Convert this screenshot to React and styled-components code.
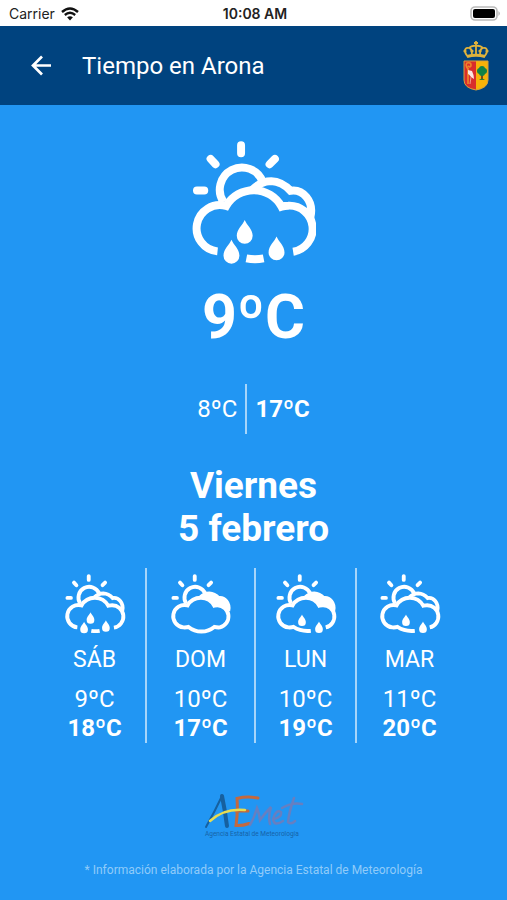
import React from "react"
import styled, { createGlobalStyle } from "styled-components"

const GlobalStyle = createGlobalStyle`
  * {
    box-sizing: border-box;
  }

  body {
    margin: 0;
    background: #2196f3;
    color: #fff;
    font-family: Roboto, "Liberation Sans", sans-serif;
  }
`

const Screen = styled.div`
  display: flex;
  flex-direction: column;
  min-height: 100vh;
`

const StatusBar = styled.div`
  display: grid;
  grid-template-columns: 1fr auto 1fr;
  align-items: center;
  height: 26px;
  padding: 1px 6px 0 9px;
  background: #fff;
  color: #222;
  font-family: Inter, "Liberation Sans", sans-serif;
  font-size: 14px;

  .carrier {
    display: flex;
    align-items: center;
    gap: 6px;
  }

  .clock {
    font-weight: 600;
  }

  .battery {
    display: flex;
    justify-content: flex-end;
  }
`

const Header = styled.header`
  display: flex;
  align-items: center;
  height: 79px;
  padding: 0 18px 0 28px;
  background: #00437f;

  h1 {
    flex: 1;
    margin: 0 0 0 28px;
    font-size: 24px;
    font-weight: 400;
    line-height: 30px;
  }
`

const BackButton = styled.button`
  display: flex;
  padding: 0;
  border: 0;
  background: none;
  color: #fff;
  cursor: pointer;
`

const Main = styled.main`
  display: flex;
  flex-direction: column;
  align-items: center;
  padding-top: 36px;
`

const Current = styled.div`
  margin-top: 16px;
  font-size: 61px;
  font-weight: 700;
  line-height: 72px;
`

const Range = styled.div`
  display: flex;
  margin-top: 31px;
  font-size: 24px;
  line-height: 50px;

  .min {
    padding-right: 8px;
    border-right: 2px solid #a6d5fa;
  }

  .max {
    padding-left: 8px;
    font-weight: 700;
  }
`

const Today = styled.h2`
  margin: 30px 0 0;
  font-size: 37px;
  font-weight: 700;
  line-height: 43px;
  text-align: center;
`

const Days = styled.div`
  display: grid;
  grid-template-columns: 101fr 109fr 101fr 107fr;
  align-self: stretch;
  margin: 18px 45px 0 44px;
`

const Day = styled.div`
  display: flex;
  flex-direction: column;
  align-items: center;
  height: 175px;
  padding-top: 6px;
  font-size: 24px;
  line-height: 29px;

  & + & {
    border-left: 2px solid #a6d5fa;
  }

  .name {
    margin: 11px 0;
    font-size: 23px;
  }

  .max {
    font-weight: 700;
  }
`

const Footer = styled.footer`
  display: flex;
  flex-direction: column;
  align-items: center;
  gap: 23px;
  margin-top: 50px;
  padding-bottom: 16px;
  color: #90cbf9;
  font-size: 12px;
  line-height: 16px;

  p {
    margin: 0;
  }
`

// tip of each drop
const drops = {
  rain: [
    [194, 270],
    [154, 330],
    [290, 320],
  ],
  cloudy: [],
  showers: [
    [197, 284],
    [303, 328],
  ],
}

const cloudTop = "A70 70 0 1 1 138 228 A96 96 0 0 1 305 230 Q315 227 325 227"

const clouds = {
  rain: `M112 365 ${cloudTop} A70 70 0 0 1 340 366`,
  cloudy: `M144 362 Q132 366 112 365 ${cloudTop} A70 70 0 0 1 340 365 Q320 366 305 362 A128 128 0 0 1 144 362 Z`,
  showers: `M252 386 Q192 393 144 362 Q132 366 112 365 ${cloudTop} A70 70 0 0 1 345 365`,
}

const WeatherIcon = ({ kind, filled, size }) => (
  <svg
    width={size}
    height={size}
    viewBox="35 32 374 374"
    fill="none"
    stroke="#fff"
    strokeWidth="24"
    aria-hidden="true"
  >
    <path
      d="M183 45V69M91 86L106 102M285 86L269 102M50 181H72"
      strokeLinecap="round"
    />
    <path d="M130 216A67 67 0 1 1 248 154" />
    <path
      d="M216 180Q242 153 274 153Q306 154 332 183C368 176 402 210 392 262L305 232Z"
      fill={filled ? "#fff" : "#2196f3"}
      stroke="none"
    />
    <path d="M216 180Q242 153 274 153Q306 154 332 182C368 176 404 212 392 262" />
    <path d={clouds[kind]} fill="#2196f3" />
    {kind === "rain" && <path d="M199 386Q225 391 251 386" />}
    {drops[kind].map(([x, y]) => (
      <path
        key={x}
        d={`M${x} ${y}C${x + 6} ${y + 15} ${x + 24} ${y + 28} ${x + 24} ${y + 48}A24 24 0 0 1 ${x - 24} ${y + 48}C${x - 24} ${y + 28} ${x - 6} ${y + 15} ${x} ${y}Z`}
        fill="#fff"
        stroke="none"
      />
    ))}
  </svg>
)

const Wifi = () => (
  <svg width="18" height="14" viewBox="0 0 18 14" fill="none" stroke="#111" aria-hidden="true">
    <path d="M1 5Q9 -2 17 5" strokeWidth="2.4" />
    <path d="M3.8 8Q9 3.6 14.2 8" strokeWidth="2.3" />
    <path d="M9 13.5L6.1 10.3Q9 8 11.9 10.3Z" fill="#111" stroke="none" />
  </svg>
)

const Battery = () => (
  <svg width="31" height="15" viewBox="0 0 31 15" aria-hidden="true">
    <rect x="1" y="1" width="26" height="13" rx="4" fill="#fff" stroke="#bbb" strokeWidth="1.6" />
    <rect x="3" y="3" width="22" height="9" rx="2" fill="#000" />
    <path d="M28.5 5Q31 7.5 28.5 10Z" fill="#aaa" />
  </svg>
)

const Arrow = () => (
  <svg width="26" height="26" viewBox="0 0 26 26" fill="none" stroke="#fff" strokeWidth="2.7">
    <path d="M23 12.5H5M14 3.5L5 12.5L14 21.5" />
  </svg>
)

const Crest = () => (
  <svg width="26" height="50" viewBox="0 0 26 50" aria-hidden="true">
    <g fill="none" stroke="#dfb23c" strokeWidth="1.8">
      <path d="M13 0V6M11 2H15M5 16C0 10 2 6 6 7Q9 7 9 14M21 16C26 10 24 6 20 7Q17 7 17 14M13 6V14" />
      <path d="M6 7Q9 4 13 5Q17 4 20 7" />
      <path d="M4 15.5Q13 13 22 15.5" strokeWidth="3" />
    </g>
    <g fill="#dfb23c">
      <circle cx="2" cy="10" r="1.6" />
      <circle cx="24" cy="10" r="1.6" />
      <circle cx="9" cy="10" r="1.6" />
      <circle cx="17" cy="10" r="1.6" />
    </g>
    <path d="M1 20H13V49Q1 47 1 39Z" fill="#d92d2b" />
    <path d="M13 20H25V39Q25 47 13 49Z" fill="#f8b208" />
    <path d="M1 20H25V39Q25 47 13 49Q1 47 1 39Z" fill="none" stroke="#d9a13a" />
    <path d="M5 43V27M5 28Q2 24 4 22Q8 21 8 24Q8 27 5 25" fill="none" stroke="#ef8428" strokeWidth="1.7" />
    <path d="M5 29L9 30Q11 34 11 38L8 36Q6 33 5 33Z" fill="#fbe6e0" />
    <path d="M8 36L7 43" stroke="#f0988c" />
    <path d="M19 33V38" stroke="#7c4a16" strokeWidth="2" />
    <path d="M16 39Q19 36 22 39Z" fill="#2d7c35" />
    <circle cx="17" cy="30" r="3" fill="#118247" />
    <circle cx="21" cy="30" r="3" fill="#118247" />
    <circle cx="19" cy="28" r="3" fill="#118247" />
    <circle cx="19" cy="32" r="3" fill="#118247" />
  </svg>
)

const AemetLogo = () => (
  <svg width="100" height="46" viewBox="0 0 200 92" role="img" aria-label="AEMet">
    <g fill="none" strokeLinecap="round">
      <path d="M4 68Q22 36 36 6" stroke="#16609f" strokeWidth="4" />
      <path d="M36 6Q42 34 46 66" stroke="#16609f" strokeWidth="8" />
      <path d="M108 10Q86 6 66 11Q68 38 64 65Q76 66 90 61M64 36H88" stroke="#c3693f" strokeWidth="6" />
      <path d="M12 56Q40 30 82 34" stroke="#e8dc50" strokeWidth="5" />
      <path
        d="M92 64Q100 50 106 30Q110 40 112 54Q122 40 134 28Q128 46 132 62M140 52Q156 48 154 38Q144 32 138 52Q140 68 158 56M180 10Q170 38 168 58Q174 64 182 56M156 30Q176 18 196 22"
        stroke="#667fc1"
        strokeWidth="5"
      />
    </g>
    <text x="2" y="86" fill="#1763a8" fontFamily="Roboto, sans-serif" fontSize="13">
      Agencia Estatal de Meteorología
    </text>
  </svg>
)

const forecast = [
  { name: "SÁB", min: 9, max: 18, kind: "rain" },
  { name: "DOM", min: 10, max: 17, kind: "cloudy", filled: true },
  { name: "LUN", min: 10, max: 19, kind: "showers", filled: true },
  { name: "MAR", min: 11, max: 20, kind: "showers" },
]

export default () => (
  <Screen>
    <GlobalStyle />
    <StatusBar>
      <div className="carrier">
        Carrier
        <Wifi />
      </div>
      <div className="clock">10:08 AM</div>
      <div className="battery">
        <Battery />
      </div>
    </StatusBar>
    <Header>
      <BackButton type="button" aria-label="Volver">
        <Arrow />
      </BackButton>
      <h1>Tiempo en Arona</h1>
      <Crest />
    </Header>
    <Main>
      <WeatherIcon kind="rain" size={124} />
      <Current>9ºC</Current>
      <Range>
        <div className="min">8ºC</div>
        <div className="max">17ºC</div>
      </Range>
      <Today>
        Viernes
        <br />5 febrero
      </Today>
      <Days>
        {forecast.map(day => (
          <Day key={day.name}>
            <WeatherIcon kind={day.kind} filled={day.filled} size={62} />
            <div className="name">{day.name}</div>
            <div>{day.min}ºC</div>
            <div className="max">{day.max}ºC</div>
          </Day>
        ))}
      </Days>
    </Main>
    <Footer>
      <AemetLogo />
      <p>* Información elaborada por la Agencia Estatal de Meteorología</p>
    </Footer>
  </Screen>
)
